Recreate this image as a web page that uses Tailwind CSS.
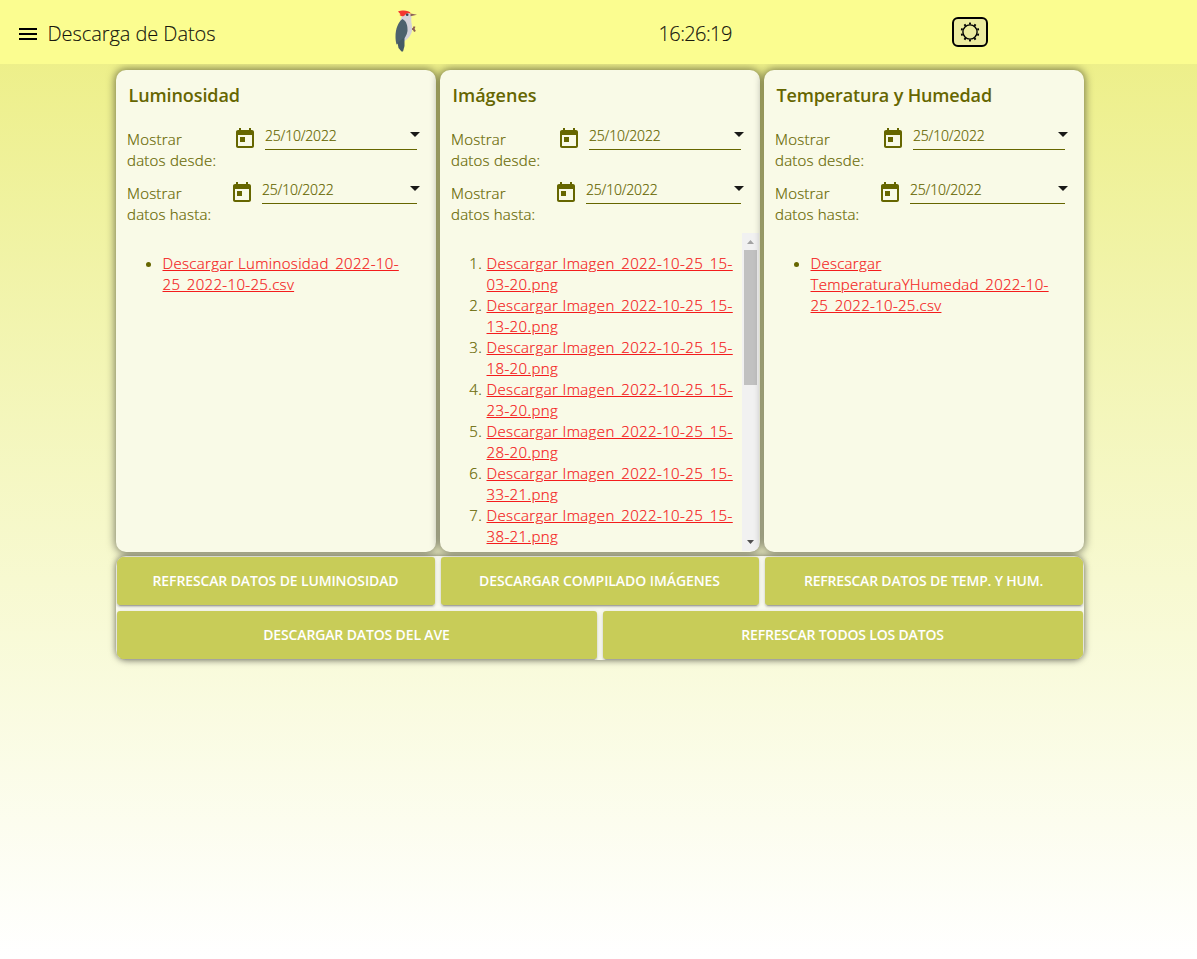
<!DOCTYPE html>
<html lang="es">
<head>
<meta charset="utf-8">
<title>Descarga de Datos</title>
<script src="https://cdn.jsdelivr.net/npm/@tailwindcss/browser@4"></script>
</head>
<body class="h-[959px] overflow-hidden bg-linear-to-b from-[#ecee80] to-white font-['Open_Sans','Noto_Sans',sans-serif] text-[15px] leading-[21px] text-[#666600]">
<svg class="hidden">
  <symbol id="cal" viewBox="0 0 24 24"><path d="M19 3h-1V1h-2v2H8V1H6v2H5c-1.11 0-1.99.9-1.99 2L3 19c0 1.1.89 2 2 2h14c1.1 0 2-.9 2-2V5c0-1.1-.9-2-2-2zm0 16H5V8h14v11zM7 10h5v5H7z"/></symbol>
  <symbol id="down" viewBox="0 0 24 24"><path d="M7 10l5 5 5-5z"/></symbol>
</svg>

<header class="relative z-10 flex h-16 bg-[#fbfd90] text-xl font-light text-black/90 [-webkit-text-stroke-width:0.2px]">
  <div class="flex w-[394px] pl-4">
    <svg class="mt-[22px] size-6 fill-black" viewBox="0 0 24 24"><path d="M3 18h18v-2H3v2zm0-5h18v-2H3v2zm0-7v2h18V6H3z"/></svg>
    <h1 class="ml-[7.500px] mt-5 leading-7 tracking-[-0.06px]">Descarga de Datos</h1>
  </div>
  <svg class="mt-[9px] h-[44px] w-[24px]" viewBox="0 0 24 44">
    <path d="M16.500 20h4M19.500 20l1-2.500M19.500 20l1.500 2.500" stroke="#8d5f50" stroke-width="2" fill="none"/>
    <path d="M8 7C5 13 4 22 6 34c6-2 10.500-6 12-12 .8-4-.8-8-.8-11 .3-2 .5-4-.5-5.500L14 3.500z" fill="#d5d3d9"/>
    <path d="M8.500 10C4 13 1.500 20 1.500 28c0 3 .5 5 1 7.500l4-2.500c4-3 6.500-7 7-11 .3-5-1-10-5-12z" fill="#4d626d"/>
    <path d="M3.500 34L10.500 28v9l-1.500 5.500H7.500L4.500 39z" fill="#455a64"/>
    <path d="M16.500 4.500l6.500 1.300-6.500 1.400z" fill="#8d6058"/>
    <path d="M4 2.500C8 1 15 1 17 4.500c-2-.5-4-.5-5.500 1C10 7.500 8 8 5.500 6l1-.8z" fill="#f5382f"/>
    <circle cx="13.200" cy="5.800" r="1.300" fill="#37474f"/>
  </svg>
  <div class="ml-[240.500px] mt-5 w-[293.500px] leading-7 tracking-[-0.6px]">16:26:19</div>
  <button class="mt-[17px] flex h-[30px] w-9 items-center justify-center rounded-md border-2 border-black bg-[#ececa0]">
    <svg class="size-5 fill-none stroke-black" viewBox="0 0 20 20"><circle cx="10" cy="10" r="7.100" stroke-width="1.400"/><circle cx="10" cy="10" r="8.500" stroke-width="1.800" pathLength="100" stroke-dasharray="3.600 6.400" stroke-dashoffset="26.800"/></svg>
  </button>
</header>

<main class="ml-[116px] w-[968px]">
  <div class="mt-1.5 grid grid-cols-3 gap-1">
    <section class="flex h-[482px] flex-col overflow-hidden rounded-[10px] bg-[#f9fae7] shadow-[0_0_8px_1px_rgba(0,0,0,0.5)]">
      <h2 class="ml-[12.500px] mt-[13px] h-11 text-lg leading-6 font-semibold tracking-[-0.1px]">Luminosidad</h2>
      <div class="flex h-[54px] pl-[11px] pt-0.5 [-webkit-text-stroke-width:0.2px]"><p class="w-[106px] font-light tracking-[0.23px]">Mostrar<br>datos desde:</p>
        <svg class="-mt-0.5 size-6 fill-[#666600]"><use href="#cal"/></svg>
        <div class="ml-2 flex h-[21px] w-[152px] justify-between border-b border-[#666600] text-sm leading-[13px] font-light tracking-[-0.2px]">25/10/2022<svg class="-mr-2.5 -mt-[7px] size-6 fill-black/90"><use href="#down"/></svg></div></div>
      <div class="flex h-[54px] pl-[11px] pt-0.5 [-webkit-text-stroke-width:0.2px]"><p class="w-[103px] font-light tracking-[0.2px]">Mostrar<br>datos hasta:</p>
        <svg class="-mt-0.5 size-6 fill-[#666600]"><use href="#cal"/></svg>
        <div class="ml-2 flex h-[21px] w-[155px] justify-between border-b border-[#666600] text-sm leading-[13px] font-light tracking-[-0.2px]">25/10/2022<svg class="-mr-2.5 -mt-[7px] size-6 fill-black/90"><use href="#down"/></svg></div></div>
      <ul class="mt-[18px] list-disc pl-[46.500px] font-light tracking-[0.33px] [-webkit-text-stroke-width:0.2px]"><li><a class="text-[#f41c1c] underline">Descargar Luminosidad_2022-10-<br>25_2022-10-25.csv</a></li></ul>
    </section>

    <section class="flex h-[482px] flex-col overflow-hidden rounded-[10px] bg-[#f9fae7] shadow-[0_0_8px_1px_rgba(0,0,0,0.5)]">
      <h2 class="ml-[12.500px] mt-[13px] h-11 text-lg leading-6 font-semibold">Imágenes</h2>
      <div class="flex h-[54px] pl-[11px] pt-0.5 [-webkit-text-stroke-width:0.2px]"><p class="w-[106px] font-light tracking-[0.23px]">Mostrar<br>datos desde:</p>
        <svg class="-mt-0.5 size-6 fill-[#666600]"><use href="#cal"/></svg>
        <div class="ml-2 flex h-[21px] w-[152px] justify-between border-b border-[#666600] text-sm leading-[13px] font-light tracking-[-0.2px]">25/10/2022<svg class="-mr-2.5 -mt-[7px] size-6 fill-black/90"><use href="#down"/></svg></div></div>
      <div class="flex h-[54px] pl-[11px] pt-0.5 [-webkit-text-stroke-width:0.2px]"><p class="w-[103px] font-light tracking-[0.2px]">Mostrar<br>datos hasta:</p>
        <svg class="-mt-0.5 size-6 fill-[#666600]"><use href="#cal"/></svg>
        <div class="ml-2 flex h-[21px] w-[155px] justify-between border-b border-[#666600] text-sm leading-[13px] font-light tracking-[-0.2px]">25/10/2022<svg class="-mr-2.5 -mt-[7px] size-6 fill-black/90"><use href="#down"/></svg></div></div>
      <div class="-mt-0.5 flex h-[318px] justify-between overflow-hidden">
        <ol class="list-decimal pl-[46.500px] pt-5 font-light tracking-[0.38px] [-webkit-text-stroke-width:0.2px]">
          <li><a class="text-[#f41c1c] underline">Descargar Imagen_2022-10-25_15-<br>03-20.png</a></li>
          <li><a class="text-[#f41c1c] underline">Descargar Imagen_2022-10-25_15-<br>13-20.png</a></li>
          <li><a class="text-[#f41c1c] underline">Descargar Imagen_2022-10-25_15-<br>18-20.png</a></li>
          <li><a class="text-[#f41c1c] underline">Descargar Imagen_2022-10-25_15-<br>23-20.png</a></li>
          <li><a class="text-[#f41c1c] underline">Descargar Imagen_2022-10-25_15-<br>28-20.png</a></li>
          <li><a class="text-[#f41c1c] underline">Descargar Imagen_2022-10-25_15-<br>33-21.png</a></li>
          <li><a class="text-[#f41c1c] underline">Descargar Imagen_2022-10-25_15-<br>38-21.png</a></li>
        </ol>
        <div class="mr-px flex w-[17px] flex-col items-center justify-between bg-[#f1f1f1]">
          <div>
            <svg class="block h-[17px] w-[13px]" viewBox="0 0 13 17"><path d="M3 11l3.500-4 3.500 4z" fill="#a3a3a3"/></svg>
            <div class="h-[135px] w-[13px] bg-[#c1c1c1]"></div>
          </div>
          <svg class="block h-[17px] w-[13px]" viewBox="0 0 13 17"><path d="M3 6h7l-3.500 4z" fill="#505050"/></svg>
        </div>
      </div>
    </section>

    <section class="flex h-[482px] flex-col overflow-hidden rounded-[10px] bg-[#f9fae7] shadow-[0_0_8px_1px_rgba(0,0,0,0.5)]">
      <h2 class="ml-[12.500px] mt-[13px] h-11 text-lg leading-6 font-semibold tracking-[-0.15px]">Temperatura y Humedad</h2>
      <div class="flex h-[54px] pl-[11px] pt-0.5 [-webkit-text-stroke-width:0.2px]"><p class="w-[106px] font-light tracking-[0.23px]">Mostrar<br>datos desde:</p>
        <svg class="-mt-0.5 size-6 fill-[#666600]"><use href="#cal"/></svg>
        <div class="ml-2 flex h-[21px] w-[152px] justify-between border-b border-[#666600] text-sm leading-[13px] font-light tracking-[-0.2px]">25/10/2022<svg class="-mr-2.5 -mt-[7px] size-6 fill-black/90"><use href="#down"/></svg></div></div>
      <div class="flex h-[54px] pl-[11px] pt-0.5 [-webkit-text-stroke-width:0.2px]"><p class="w-[103px] font-light tracking-[0.2px]">Mostrar<br>datos hasta:</p>
        <svg class="-mt-0.5 size-6 fill-[#666600]"><use href="#cal"/></svg>
        <div class="ml-2 flex h-[21px] w-[155px] justify-between border-b border-[#666600] text-sm leading-[13px] font-light tracking-[-0.2px]">25/10/2022<svg class="-mr-2.5 -mt-[7px] size-6 fill-black/90"><use href="#down"/></svg></div></div>
      <ul class="mt-[18px] list-disc pl-[46.500px] font-light tracking-[0.29px] [-webkit-text-stroke-width:0.2px]"><li><a class="text-[#f41c1c] underline">Descargar<br>TemperaturaYHumedad_2022-10-<br>25_2022-10-25.csv</a></li></ul>
    </section>
  </div>

  <div class="mt-1 flex h-[104px] flex-col gap-1.5 overflow-hidden rounded-[10px] bg-[#fafbf0] p-px text-sm font-semibold text-white shadow-[0_0_7px_rgba(0,0,0,0.6)]">
    <div class="grid grid-cols-3 gap-1.5">
      <button class="h-12 rounded-[3px] bg-[#c8cc58] pr-px tracking-[-0.13px] shadow-[0_3px_1px_-2px_rgba(0,0,0,0.2),0_2px_2px_rgba(0,0,0,0.14),0_1px_5px_rgba(0,0,0,0.12)]">REFRESCAR DATOS DE LUMINOSIDAD</button>
      <button class="h-12 rounded-[3px] bg-[#c8cc58] pr-px tracking-[-0.08px] shadow-[0_3px_1px_-2px_rgba(0,0,0,0.2),0_2px_2px_rgba(0,0,0,0.14),0_1px_5px_rgba(0,0,0,0.12)]">DESCARGAR COMPILADO IMÁGENES</button>
      <button class="h-12 rounded-[3px] bg-[#c8cc58] pr-px tracking-[-0.19px] shadow-[0_3px_1px_-2px_rgba(0,0,0,0.2),0_2px_2px_rgba(0,0,0,0.14),0_1px_5px_rgba(0,0,0,0.12)]">REFRESCAR DATOS DE TEMP. Y HUM.</button>
    </div>
    <div class="grid grid-cols-2 gap-1.5">
      <button class="h-12 rounded-[3px] bg-[#c8cc58] pr-px tracking-[-0.14px] shadow-[0_3px_1px_-2px_rgba(0,0,0,0.2),0_2px_2px_rgba(0,0,0,0.14),0_1px_5px_rgba(0,0,0,0.12)]">DESCARGAR DATOS DEL AVE</button>
      <button class="h-12 rounded-[3px] bg-[#c8cc58] pr-px tracking-[-0.18px] shadow-[0_3px_1px_-2px_rgba(0,0,0,0.2),0_2px_2px_rgba(0,0,0,0.14),0_1px_5px_rgba(0,0,0,0.12)]">REFRESCAR TODOS LOS DATOS</button>
    </div>
  </div>
</main>
</body>
</html>
